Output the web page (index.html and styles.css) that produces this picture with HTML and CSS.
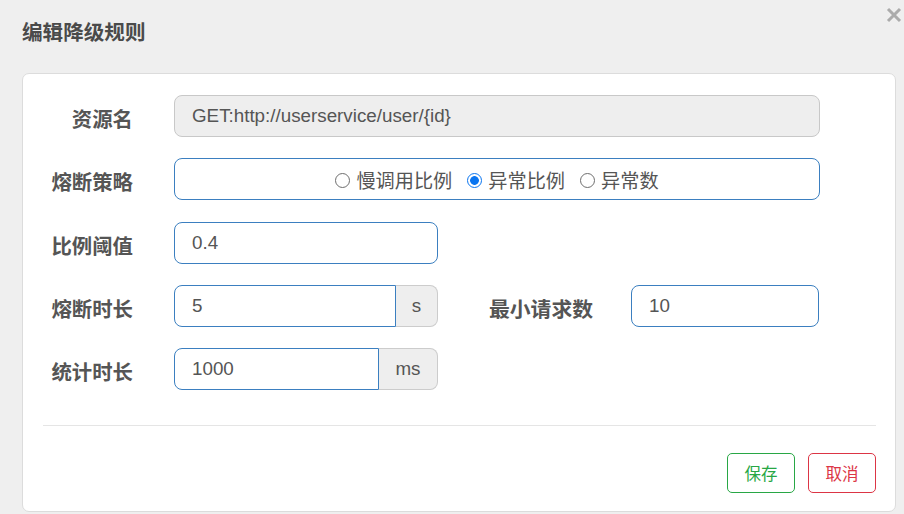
FILE: index.html
```html
<!DOCTYPE html>
<html lang="zh-CN">
<head>
<meta charset="utf-8">
<title>编辑降级规则</title>
<link rel="stylesheet" href="styles.css">
</head>
<body>
<div class="modal">
  <div class="modal-header">
    <h3 class="modal-title">编辑降级规则</h3>
    <span class="close">
      <svg width="16" height="16" viewBox="0 0 16 16"><path d="M2 2 L14 14 M14 2 L2 14" stroke="#ababab" stroke-width="3" stroke-linecap="butt"/></svg>
    </span>
  </div>
  <div class="card">
    <div class="form">
      <div class="row">
        <label class="label">资源名</label>
        <div class="input disabled wide">GET:http://userservice/user/{id}</div>
      </div>
      <div class="row">
        <label class="label">熔断策略</label>
        <div class="input wide radios">
          <label class="radio"><span class="dot"></span>慢调用比例</label>
          <label class="radio"><span class="dot checked"></span>异常比例</label>
          <label class="radio"><span class="dot"></span>异常数</label>
        </div>
      </div>
      <div class="row">
        <label class="label">比例阈值</label>
        <div class="input short">0.4</div>
      </div>
      <div class="row">
        <label class="label">熔断时长</label>
        <div class="group short">
          <div class="input grow">5</div>
          <div class="addon addon-s">s</div>
        </div>
        <label class="label label2">最小请求数</label>
        <div class="input small">10</div>
      </div>
      <div class="row">
        <label class="label">统计时长</label>
        <div class="group short">
          <div class="input grow">1000</div>
          <div class="addon addon-ms">ms</div>
        </div>
      </div>
    </div>
    <div class="divider"></div>
    <div class="footer">
      <button class="btn btn-save">保存</button>
      <button class="btn btn-cancel">取消</button>
    </div>
  </div>
</div>
</body>
</html>
```

FILE: styles.css
```css
* { box-sizing: border-box; }
html, body {
  margin: 0;
  padding: 0;
  background: #efefef;
  width: 904px;
  height: 514px;
  overflow: hidden;
  font-family: "Liberation Sans", "Noto Sans CJK SC", sans-serif;
}
.modal {
  position: relative;
  width: 904px;
  height: 514px;
}
.modal-header {
  position: relative;
  height: 73px;
  padding: 18px 0 0 22px;
}
.modal-title {
  margin: 0;
  font-size: 20.6px;
  line-height: 26px;
  font-weight: bold;
  color: #4a4a4a;
  font-family: "Noto Sans CJK SC", sans-serif;
}
.close {
  position: absolute;
  left: 886px;
  top: 7px;
  width: 16px;
  height: 16px;
}
.close svg { display: block; }
.card {
  margin-left: 22px;
  width: 874px;
  height: 439px;
  background: #fff;
  border: 1px solid #dcdcdc;
  border-radius: 7px;
  padding: 21px 19px 0 19px;
  display: flex;
  flex-direction: column;
}
.form {
  display: flex;
  flex-direction: column;
  gap: 21.3px;
}
.row {
  display: flex;
  align-items: center;
  height: 42px;
}
.label {
  width: 91px;
  margin-right: 41px;
  text-align: right;
  font-size: 20.4px;
  font-weight: bold;
  color: #555;
  white-space: nowrap;
  padding-top: 4px;
  font-family: "Noto Sans CJK SC", sans-serif;
}
.label2 {
  width: auto;
  margin-left: 51px;
  margin-right: 38px;
  font-size: 20.8px;
}
.input {
  height: 42px;
  border: 1px solid #3b7fc0;
  border-radius: 8px;
  padding: 0 17px;
  display: flex;
  align-items: center;
  font-size: 18.8px;
  color: #555;
  background: #fff;
}
.disabled {
  background: #eee;
  border-color: #c8c8c8;
}
.wide { width: 646px; }
.short { width: 264px; }
.small { width: 188px; }
.radios {
  justify-content: center;
  gap: 15px;
  font-size: 19.2px;
  color: #555;
  font-family: "Noto Sans CJK SC", sans-serif;
  padding: 2px 0 0 0;
}
.radio {
  display: flex;
  align-items: center;
}
.dot {
  width: 15px;
  height: 15px;
  border: 1.4px solid #6e6e6e;
  border-radius: 50%;
  margin-right: 6px;
  display: inline-block;
}
.dot.checked {
  border: 1.6px solid #0a75f0;
  background: radial-gradient(circle, #0a75f0 0 4px, #fff 4.7px);
}
.group {
  display: flex;
  height: 42px;
}
.group .grow {
  flex: 1;
  border-radius: 8px 0 0 8px;
}
.addon {
  height: 42px;
  background: #eee;
  border: 1px solid #ccc;
  border-left: none;
  border-radius: 0 8px 8px 0;
  display: flex;
  align-items: center;
  justify-content: center;
  font-size: 18.8px;
  color: #555;
}
.addon-s { width: 42px; }
.addon-ms { width: 59px; }
.divider {
  height: 1px;
  background: #e5e5e5;
  margin-top: 35px;
  margin-left: 1px;
  margin-right: 0;
}
.footer {
  display: flex;
  justify-content: flex-end;
  gap: 13px;
  margin-top: 27px;
}
.btn {
  width: 68px;
  height: 40px;
  background: #fff;
  border-radius: 5px;
  font-size: 16.5px;
  font-family: "Noto Sans CJK SC", sans-serif;
  padding: 0;
  cursor: pointer;
}
.btn-save {
  border: 1px solid #28a745;
  color: #28a745;
}
.btn-cancel {
  border: 1px solid #dc3545;
  color: #dc3545;
}
```
